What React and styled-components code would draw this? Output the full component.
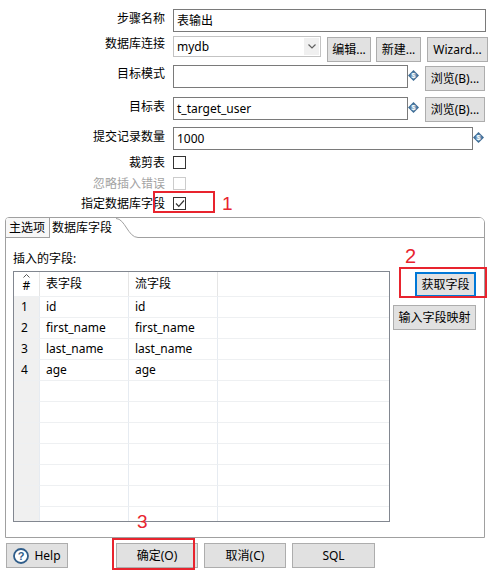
import React from 'react';
import styled, { createGlobalStyle } from 'styled-components';

const FONT = `"Noto Sans", "Noto Sans CJK SC", sans-serif`;

const Global = createGlobalStyle`
  html, body { margin: 0; padding: 0; background: #fff; }
  body { font-family: ${FONT}; font-size: 12px; color: #000; }
  * { box-sizing: border-box; }
`;

const Window = styled.div`
  position: relative;
  width: 490px;
  height: 574px;
  overflow: hidden;
  background: #fff;
  display: flex;
  flex-direction: column;
`;

const Form = styled.div`
  display: flex;
  flex-direction: column;
  padding-top: 9px;
`;

const Row = styled.div`
  display: grid;
  grid-template-columns: 165px 1fr;
  column-gap: 8px;
  height: ${p => p.$h}px;
  margin-top: ${p => p.$mt || 0}px;
  align-items: start;
`;

const Label = styled.div`
  text-align: right;
  white-space: nowrap;
  line-height: ${p => p.$lh || 16}px;
  padding-top: ${p => p.$pt || 0}px;
  color: ${p => (p.$disabled ? '#a3a3a3' : '#000')};
`;

const Fields = styled.div`
  display: flex;
  align-items: flex-start;
  gap: ${p => p.$gap || 0}px;
`;

const TextBox = styled.div`
  width: ${p => p.$w}px;
  height: 23px;
  border: 1px solid #7a7a7a;
  background: #fff;
  padding-left: 3px;
  line-height: 21px;
  white-space: nowrap;
  overflow: hidden;
`;

const Combo = styled.div`
  width: 148px;
  height: 21px;
  border: 1px solid #c3c3c3;
  background: #fff;
  display: flex;
  align-items: center;
  justify-content: space-between;
  padding-left: 3px;
  padding-right: 1px;
  line-height: 19px;
`;

const ComboArrow = styled.div`
  width: 15px;
  height: 17px;
  background: #f0f0f0;
  display: flex;
  align-items: center;
  justify-content: center;
`;

const Button = styled.div`
  width: ${p => p.$w}px;
  height: 25px;
  margin-top: ${p => p.$mt || 0}px;
  margin-left: ${p => p.$ml || 0}px;
  background: #e1e1e1;
  border: ${p => (p.$focus ? '2px solid #0078d7' : '1px solid #adadad')};
  display: flex;
  align-items: center;
  justify-content: center;
  gap: 5px;
  white-space: nowrap;
  line-height: 16px;
  color: #000;
  flex: none;
`;

const IconSlot = styled.div`
  width: 11px;
  height: 11px;
  margin-top: ${p => p.$mt || 0}px;
  flex: none;
  display: flex;
`;

const CheckBox = styled.div`
  width: 13px;
  height: 13px;
  border: 1px solid ${p => (p.$disabled ? '#cccccc' : '#333333')};
  background: #fff;
  display: flex;
  align-items: center;
  justify-content: center;
`;

/* Tab folder */
const TabFolder = styled.div`
  margin: 7px 5px 0 5px;
  height: 321px;
  border: 1px solid #a0a0a0;
  border-radius: 4px 6px 0 0;
  display: flex;
  flex-direction: column;
  overflow: hidden;
`;

const TabBar = styled.div`
  display: flex;
  height: 20px;
  flex: none;
  background: #fff;
`;

const Tab = styled.div`
  height: 20px;
  padding: 0 ${p => p.$pr || 4}px 0 ${p => p.$pl || 3}px;
  line-height: 19px;
  white-space: nowrap;
  background: ${p => (p.$active ? '#fff' : '#f7f7f7')};
  border-right: ${p => (p.$sep ? '1px solid #a0a0a0' : 'none')};
  border-bottom: 1px solid ${p => (p.$active ? '#fff' : '#a0a0a0')};
`;

const TabCurve = styled.svg`
  width: 22px;
  height: 20px;
  flex: none;
  display: block;
`;

const TabFiller = styled.div`
  flex: 1;
  height: 20px;
  border-bottom: 1px solid #a0a0a0;
  background: #fff;
`;

const PanelBody = styled.div`
  flex: 1;
  display: grid;
  grid-template-columns: 377px 1fr;
  grid-template-rows: 16px 1fr;
  row-gap: 4px;
  padding: 13px 8px 0 7px;
`;

const SectionLabel = styled.div`
  grid-column: 1 / span 2;
  line-height: 16px;
`;

const SideButtons = styled.div`
  display: flex;
  flex-direction: column;
  align-items: flex-end;
  gap: 8px;
  padding-top: 1px;
`;

/* Table */
const TableBox = styled.div`
  width: 377px;
  height: 251px;
  border: 1px solid #828790;
  background: #fff;
  overflow: hidden;
`;

const Grid = styled.div`
  display: grid;
  grid-template-columns: 26px 89px 89px 1fr;
  grid-auto-rows: 21px;
  grid-template-rows: 24px;
`;

const HeadCell = styled.div`
  border-right: ${p => (p.$last ? 'none' : '1px solid #e5e5e5')};
  padding-left: 6px;
  line-height: 24px;
  white-space: nowrap;
`;

const NumHead = styled.div`
  border-right: 1px solid #e5e5e5;
  display: flex;
  flex-direction: column;
  align-items: center;
  padding-top: 2px;
`;

const SortCaret = styled.svg`
  width: 7px;
  height: 4px;
  display: block;
  flex: none;
`;

const HashText = styled.span`
  line-height: 16px;
`;

const Cell = styled.div`
  border-right: ${p => (p.$last ? 'none' : '1px solid #e6ebf1')};
  border-top: 1px solid #eef0f2;
  background: ${p => (p.$num ? '#f0f0f0' : '#fff')};
  padding-left: ${p => (p.$num ? 7 : 6)}px;
  line-height: 20px;
  white-space: nowrap;
`;

const BottomBar = styled.div`
  display: flex;
  align-items: center;
  gap: 6px;
  margin-top: 5px;
  padding-left: 6px;
`;

const Mark = styled.div`
  position: absolute;
  left: ${p => p.$x}px;
  top: ${p => p.$y}px;
  width: ${p => p.$w}px;
  height: ${p => p.$h}px;
  border: 2px solid #e8242e;
`;

const MarkNum = styled.div`
  position: absolute;
  left: ${p => p.$x}px;
  top: ${p => p.$y}px;
  font-family: "Liberation Sans", Arial, sans-serif;
  font-size: ${p => p.$s || 19}px;
  line-height: 1;
  color: #e8242e;
`;

const DbIcon = ({ mt }) => (
  <IconSlot $mt={mt}>
    <svg width="11" height="11" viewBox="0 0 11 11">
      <polygon points="5.5,0 11,5.5 5.5,11 0,5.5" fill="#3f6d96" />
      <circle cx="5.5" cy="5.5" r="3" fill="#6f97bb" />
      <text x="5.5" y="8" textAnchor="middle" fontSize="7" fontWeight="bold" fill="#fff" fontFamily="Liberation Sans, sans-serif">$</text>
    </svg>
  </IconSlot>
);

const Check = () => (
  <svg width="10" height="9" viewBox="0 0 10 9">
    <polyline points="1,4.5 3.8,7.3 9,1.5" fill="none" stroke="#333" strokeWidth="1.2" />
  </svg>
);

const rows = [
  ['1', 'id', 'id'],
  ['2', 'first_name', 'first_name'],
  ['3', 'last_name', 'last_name'],
  ['4', 'age', 'age'],
  ['', '', ''], ['', '', ''], ['', '', ''], ['', '', ''], ['', '', ''], ['', '', ''], ['', '', ''],
];

export default function App() {
  return (
    <>
      <Global />
      <Window>
        <Form>
          <Row $h={23}>
            <Label $pt={2}>步骤名称</Label>
            <Fields><TextBox $w={313}>表输出</TextBox></Fields>
          </Row>
          <Row $h={26} $mt={4}>
            <Label>数据库连接</Label>
            <Fields $gap={5}>
              <Combo>
                mydb
                <ComboArrow>
                  <svg width="8" height="5" viewBox="0 0 8 5">
                    <polyline points="0.5,0.5 4,4 7.5,0.5" fill="none" stroke="#606060" strokeWidth="1.2" />
                  </svg>
                </ComboArrow>
              </Combo>
              <Button $w={44} $mt={1} $ml={1}>编辑...</Button>
              <Button $w={45} $mt={1}>新建...</Button>
              <Button $w={61} $mt={1} $ml={1}>Wizard...</Button>
            </Fields>
          </Row>
          <Row $h={26} $mt={3}>
            <Label $pt={1}>目标模式</Label>
            <Fields>
              <TextBox $w={235} />
              <DbIcon mt={5} />
              <Button $w={60} $mt={1} $ml={6}>浏览(B)...</Button>
            </Fields>
          </Row>
          <Row $h={26} $mt={6}>
            <Label $pt={2}>目标表</Label>
            <Fields>
              <TextBox $w={235}>t_target_user</TextBox>
              <DbIcon mt={5} />
              <Button $w={60} $ml={6}>浏览(B)...</Button>
            </Fields>
          </Row>
          <Row $h={23} $mt={4}>
            <Label $pt={2}>提交记录数量</Label>
            <Fields>
              <TextBox $w={300}>1000</TextBox>
              <DbIcon mt={5} />
            </Fields>
          </Row>
          <Row $h={13} $mt={6}>
            <Label $lh={13}>裁剪表</Label>
            <Fields><CheckBox /></Fields>
          </Row>
          <Row $h={13} $mt={8}>
            <Label $lh={13} $disabled>忽略插入错误</Label>
            <Fields><CheckBox $disabled /></Fields>
          </Row>
          <Row $h={13} $mt={7}>
            <Label $lh={13}>指定数据库字段</Label>
            <Fields><CheckBox><Check /></CheckBox></Fields>
          </Row>
        </Form>

        <TabFolder>
          <TabBar>
            <Tab $sep $pl={3} $pr={4}>主选项</Tab>
            <Tab $active $pl={2} $pr={0}>数据库字段</Tab>
            <TabCurve viewBox="0 0 22 20">
              <path d="M0,0 C9,0 12,19.5 22,19.5 L22,20 L0,20 Z" fill="#fff" />
              <path d="M0,0.5 C9,0.5 12,19.5 22,19.5" fill="none" stroke="#a0a0a0" strokeWidth="1" />
            </TabCurve>
            <TabFiller />
          </TabBar>
          <PanelBody>
            <SectionLabel>插入的字段:</SectionLabel>
            <TableBox>
              <Grid>
                <NumHead>
                  <SortCaret viewBox="0 0 7 4">
                    <polyline points="0.5,3.5 3.5,0.5 6.5,3.5" fill="none" stroke="#555" strokeWidth="1" />
                  </SortCaret>
                  <HashText>#</HashText>
                </NumHead>
                <HeadCell>表字段</HeadCell>
                <HeadCell>流字段</HeadCell>
                <HeadCell $last />
                {rows.map((r, i) => (
                  <React.Fragment key={i}>
                    <Cell $num>{r[0]}</Cell>
                    <Cell>{r[1]}</Cell>
                    <Cell>{r[2]}</Cell>
                    <Cell $last />
                  </React.Fragment>
                ))}
              </Grid>
            </TableBox>
            <SideButtons>
              <Button $w={61} $focus>获取字段</Button>
              <Button $w={83}>输入字段映射</Button>
            </SideButtons>
          </PanelBody>
        </TabFolder>

        <BottomBar>
          <Button $w={62}>
            <svg width="16" height="16" viewBox="0 0 16 16">
              <circle cx="8" cy="8" r="7" fill="#fff" stroke="#2f5d8a" strokeWidth="1.8" />
              <text x="8" y="12" textAnchor="middle" fontSize="11" fontWeight="bold" fill="#2f5d8a" fontFamily="Liberation Sans, sans-serif">?</text>
            </svg>
            Help
          </Button>
          <Button $w={82} $ml={42}>确定(O)</Button>
          <Button $w={82}>取消(C)</Button>
          <Button $w={83}>SQL</Button>
        </BottomBar>

        <Mark $x={153} $y={191} $w={62} $h={22} />
        <MarkNum $x={222} $y={194} $s={19}>1</MarkNum>
        <Mark $x={399} $y={267} $w={88} $h={31} />
        <MarkNum $x={405} $y={246} $s={20}>2</MarkNum>
        <Mark $x={112} $y={538} $w={83} $h={32} />
        <MarkNum $x={137} $y={512} $s={19}>3</MarkNum>
      </Window>
    </>
  );
}
